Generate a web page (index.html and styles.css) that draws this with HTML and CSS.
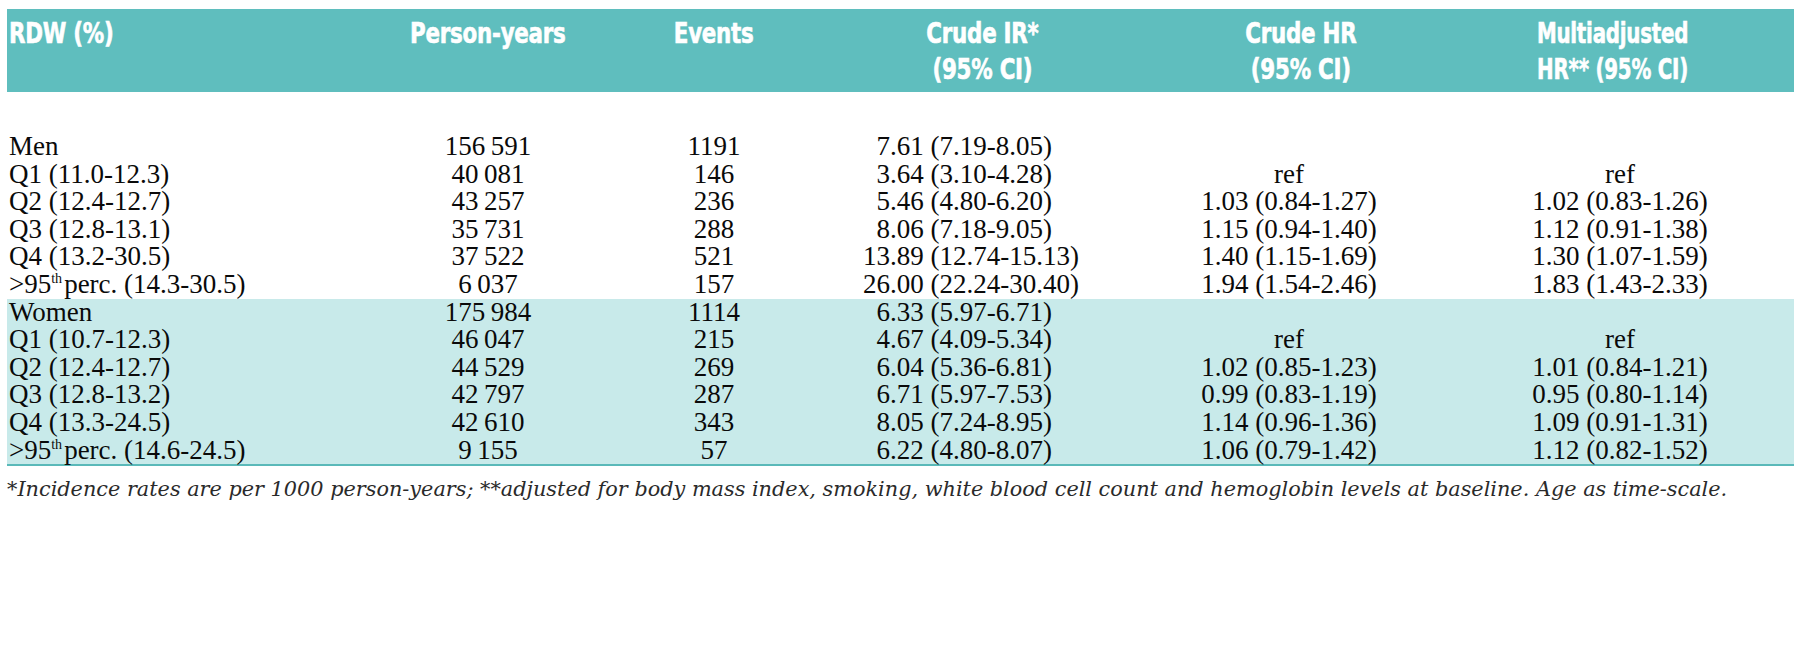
FILE: index.html
```html
<!DOCTYPE html>
<html lang="en">
<head>
<meta charset="utf-8">
<title>RDW table</title>
<link rel="stylesheet" href="styles.css">
</head>
<body>
<div class="page">
<table class="rdw">
  <colgroup>
    <col class="w1"><col class="w2"><col class="w3"><col class="w4"><col class="w5"><col class="w6">
  </colgroup>
  <thead>
    <tr>
      <th class="c-label"><span class="hl hl-left">RDW (%)</span></th>
      <th><span class="hl">Person-years</span></th>
      <th><span class="hl">Events</span></th>
      <th><span class="hl">Crude IR*<br>(95% CI)</span></th>
      <th class="h-hr"><span class="hl">Crude HR<br>(95% CI)</span></th>
      <th class="h-mhr"><span class="hl">Multiadjusted<br>HR** (95% CI)</span></th>
    </tr>
  </thead>
  <tbody class="men">
    <tr class="spacer"><td colspan="6"></td></tr>
    <tr><td class="c-label">Men</td><td>156&#8201;591</td><td>1191</td><td class="ir"><span class="int">7</span>.61 (7.19-8.05)</td><td></td><td></td></tr>
    <tr><td class="c-label">Q1 (11.0-12.3)</td><td>40&#8201;081</td><td>146</td><td class="ir"><span class="int">3</span>.64 (3.10-4.28)</td><td>ref</td><td>ref</td></tr>
    <tr><td class="c-label">Q2 (12.4-12.7)</td><td>43&#8201;257</td><td>236</td><td class="ir"><span class="int">5</span>.46 (4.80-6.20)</td><td>1.03 (0.84-1.27)</td><td>1.02 (0.83-1.26)</td></tr>
    <tr><td class="c-label">Q3 (12.8-13.1)</td><td>35&#8201;731</td><td>288</td><td class="ir"><span class="int">8</span>.06 (7.18-9.05)</td><td>1.15 (0.94-1.40)</td><td>1.12 (0.91-1.38)</td></tr>
    <tr><td class="c-label">Q4 (13.2-30.5)</td><td>37&#8201;522</td><td>521</td><td class="ir"><span class="int">13</span>.89 (12.74-15.13)</td><td>1.40 (1.15-1.69)</td><td>1.30 (1.07-1.59)</td></tr>
    <tr><td class="c-label">&gt;95<sup>th</sup>perc. (14.3-30.5)</td><td>6&#8201;037</td><td>157</td><td class="ir"><span class="int">26</span>.00 (22.24-30.40)</td><td>1.94 (1.54-2.46)</td><td>1.83 (1.43-2.33)</td></tr>
  </tbody>
  <tbody class="women">
    <tr><td class="c-label">Women</td><td>175&#8201;984</td><td>1114</td><td class="ir"><span class="int">6</span>.33 (5.97-6.71)</td><td></td><td></td></tr>
    <tr><td class="c-label">Q1 (10.7-12.3)</td><td>46&#8201;047</td><td>215</td><td class="ir"><span class="int">4</span>.67 (4.09-5.34)</td><td>ref</td><td>ref</td></tr>
    <tr><td class="c-label">Q2 (12.4-12.7)</td><td>44&#8201;529</td><td>269</td><td class="ir"><span class="int">6</span>.04 (5.36-6.81)</td><td>1.02 (0.85-1.23)</td><td>1.01 (0.84-1.21)</td></tr>
    <tr><td class="c-label">Q3 (12.8-13.2)</td><td>42&#8201;797</td><td>287</td><td class="ir"><span class="int">6</span>.71 (5.97-7.53)</td><td>0.99 (0.83-1.19)</td><td>0.95 (0.80-1.14)</td></tr>
    <tr><td class="c-label">Q4 (13.3-24.5)</td><td>42&#8201;610</td><td>343</td><td class="ir"><span class="int">8</span>.05 (7.24-8.95)</td><td>1.14 (0.96-1.36)</td><td>1.09 (0.91-1.31)</td></tr>
    <tr><td class="c-label">&gt;95<sup>th</sup>perc. (14.6-24.5)</td><td>9&#8201;155</td><td>57</td><td class="ir"><span class="int">6</span>.22 (4.80-8.07)</td><td>1.06 (0.79-1.42)</td><td>1.12 (0.82-1.52)</td></tr>
  </tbody>
</table>
<p class="note">*Incidence rates are per 1000 person-years; **adjusted for body mass index, smoking, white blood cell count and hemoglobin levels at baseline. Age as time-scale.</p>
</div>
</body>
</html>
```

FILE: styles.css
```css
html, body {
  margin: 0;
  padding: 0;
  background: #ffffff;
}

.page {
  padding: 9px 6px 0 7px;
}

.rdw {
  width: 1787px;
  border-collapse: collapse;
  border-spacing: 0;
  table-layout: fixed;
  font-family: "Liberation Serif", "Times New Roman", serif;
  font-size: 27px;
  color: #0a0a0a;
}

.w1 { width: 373px; }
.w2 { width: 216px; }
.w3 { width: 236px; }
.w4 { width: 300px; }
.w5 { width: 314px; }
.w6 { width: 348px; }

.rdw thead th {
  background: #5fbebe;
  color: #ffffff;
  font-family: "DejaVu Sans Condensed", "DejaVu Sans", "Liberation Sans", sans-serif;
  font-stretch: condensed;
  font-weight: 700;
  font-size: 29px;
  line-height: 36px;
  text-align: center;
  vertical-align: top;
  padding: 6px 0 5px 0;
  letter-spacing: -0.3px;
}

.hl {
  display: inline-block;
  transform: scaleX(0.82);
  transform-origin: center top;
  -webkit-text-stroke: 0.6px #ffffff;
}

.hl-left {
  transform-origin: left top;
}

.rdw thead th.c-label {
  text-align: left;
  padding-left: 2px;
}

.rdw thead th.h-hr {
  padding-left: 24px;
}

.rdw thead th.h-mhr {
  padding-right: 14px;
}

.rdw thead th.h-mhr .hl {
  transform: scaleX(0.76);
}

.rdw tbody td {
  padding: 0;
  line-height: 27.6px;
  height: 27.6px;
  text-align: center;
  white-space: nowrap;
}

.rdw tbody td.c-label {
  text-align: left;
  padding-left: 2px;
}

.rdw tbody td.ir {
  text-align: left;
  padding-left: 31px;
}

.int {
  display: inline-block;
  min-width: 27px;
  text-align: right;
}

.rdw tr.spacer td {
  height: 41px;
  line-height: 0;
}

.rdw sup {
  font-size: 14px;
  line-height: 0;
  vertical-align: 10px;
  margin-right: 2px;
}

.rdw tbody.women {
  background: #c8eaea;
  border-bottom: 2px solid #5ab9b9;
}

.note {
  margin: 9px 0 0 0;
  font-family: "DejaVu Serif", "Liberation Serif", serif;
  font-style: italic;
  font-size: 20.8px;
  line-height: 28px;
  color: #2a2a2a;
  white-space: nowrap;
}
```
